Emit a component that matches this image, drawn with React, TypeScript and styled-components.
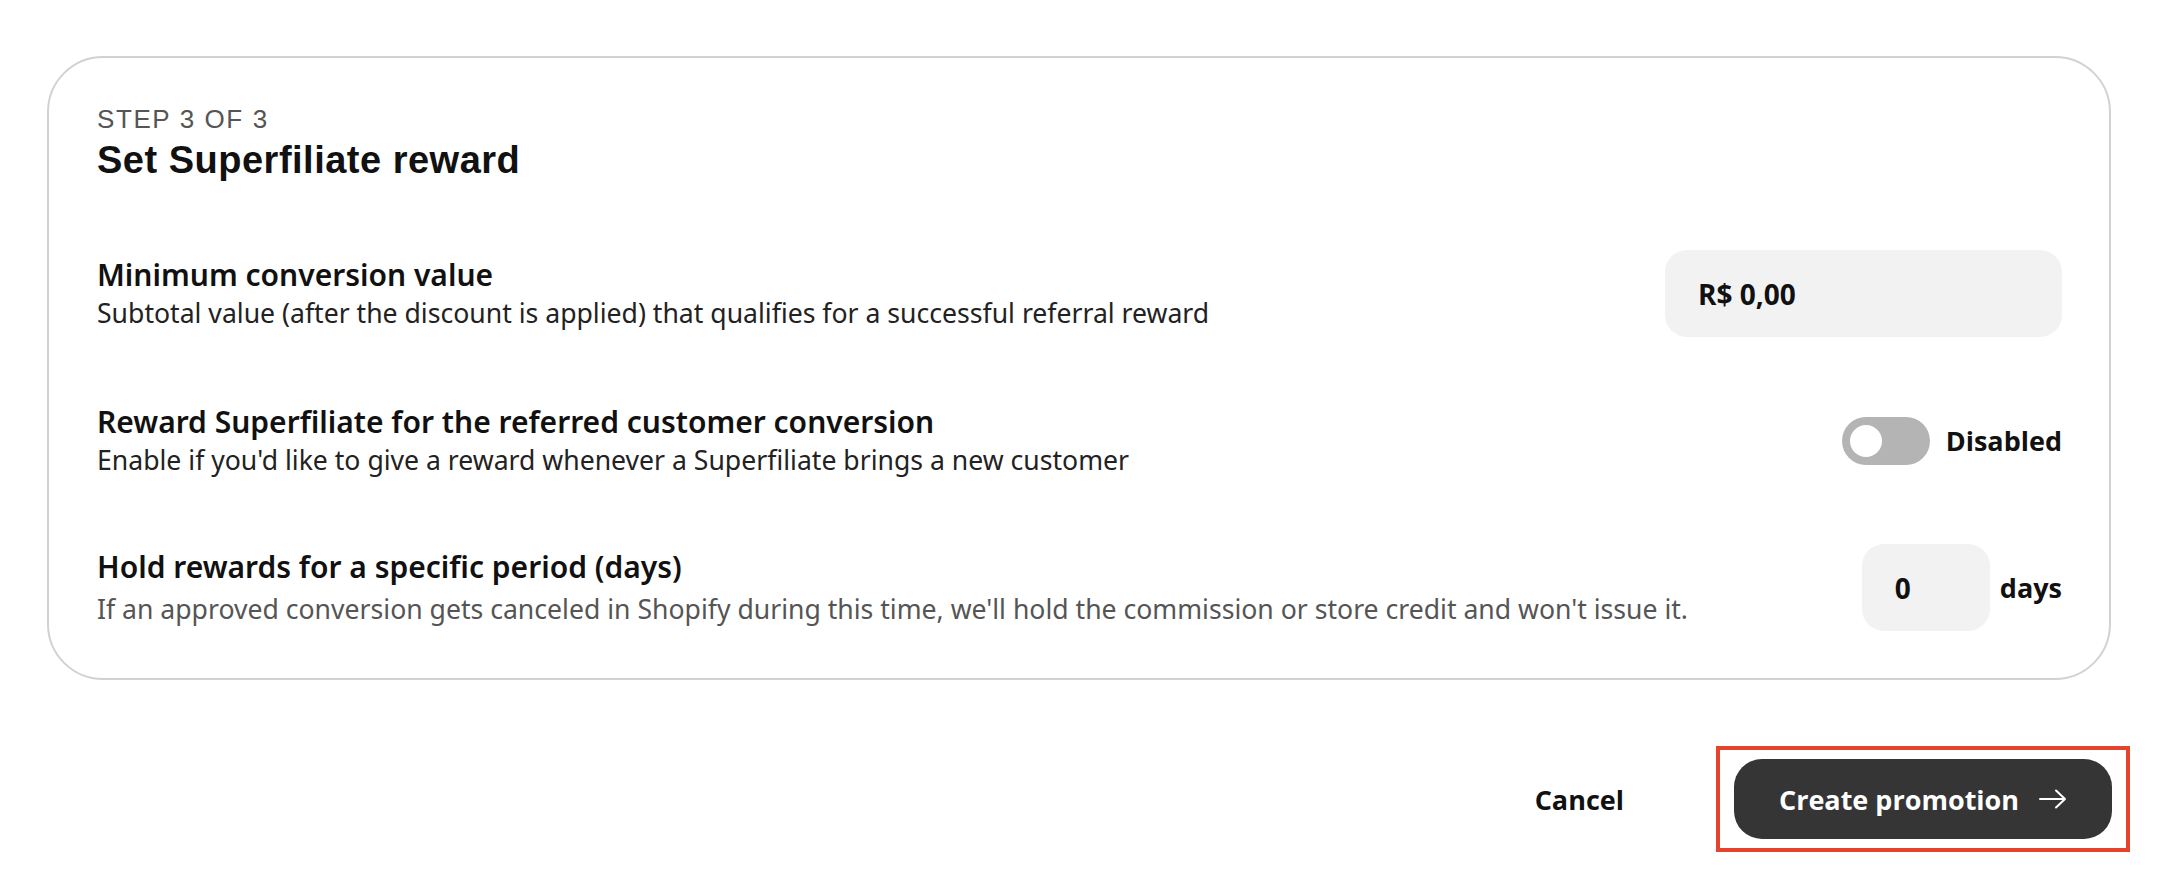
import styled, { createGlobalStyle } from "styled-components";

const GlobalStyle = createGlobalStyle`
  html, body {
    margin: 0;
    padding: 0;
    background: #ffffff;
  }
  body {
    font-family: "Open Sans", "Noto Sans", sans-serif;
    color: #111111;
  }
`;

const Page = styled.div`
  display: flex;
  flex-direction: column;
  padding: 56px 55px 0 47px;
`;

const Card = styled.section`
  border: 2px solid #d2d2d2;
  border-radius: 56px;
  padding: 46px 47px 47px 48px;
  display: flex;
  flex-direction: column;
`;

const StepLabel = styled.div`
  font-family: "Liberation Sans", Arial, sans-serif;
  font-size: 26px;
  line-height: 30px;
  color: #555555;
  letter-spacing: 1.6px;
`;

const Title = styled.h1`
  margin: 4px 0 0;
  font-family: "Liberation Sans", Arial, sans-serif;
  font-size: 38px;
  line-height: 44px;
  font-weight: 700;
  letter-spacing: 0.5px;
  color: #111111;
`;

const Rows = styled.div`
  display: flex;
  flex-direction: column;
  gap: 60px;
  margin-top: 68px;
`;

const Row = styled.div`
  display: flex;
  align-items: center;
  justify-content: space-between;
  min-height: 87px;
  gap: 40px;
`;

const RowText = styled.div`
  display: flex;
  flex-direction: column;
`;

const RowTitle = styled.div`
  font-family: "Noto Sans", "Open Sans", sans-serif;
  font-size: 30px;
  font-weight: 600;
  line-height: 39px;
  color: #111111;
`;

const RowDesc = styled.div<{ muted?: boolean }>`
  margin-top: ${({ muted }) => (muted ? "4px" : "0")};
  font-family: "Noto Sans", "Open Sans", sans-serif;
  font-size: 26.6px;
  line-height: 39px;
  color: ${({ muted }) => (muted ? "#555555" : "#222222")};
`;

const Field = styled.div<{ width: number }>`
  width: ${({ width }) => width}px;
  height: 87px;
  box-sizing: border-box;
  background: #f2f2f2;
  border-radius: 22px;
  display: flex;
  align-items: center;
  padding-left: 33px;
  font-family: "Open Sans", sans-serif;
  font-size: 28px;
  font-weight: 700;
  color: #111111;
`;

const Control = styled.div`
  display: flex;
  align-items: center;
  gap: 10px;
  flex-shrink: 0;
`;

const ControlLabel = styled.span`
  font-family: "Open Sans", sans-serif;
  font-size: 27px;
  font-weight: 700;
  color: #111111;
`;

const Toggle = styled.div`
  width: 88px;
  height: 48px;
  border-radius: 24px;
  background: #b4b4b4;
  display: flex;
  align-items: center;
  padding-left: 8px;
  box-sizing: border-box;
  margin-right: 6px;

  .knob {
    width: 32px;
    height: 32px;
    border-radius: 50%;
    background: #ffffff;
  }
`;

const Footer = styled.div`
  display: flex;
  justify-content: flex-end;
  align-items: center;
  gap: 92px;
  margin-top: 66px;
  margin-right: -19px;
`;

const CancelButton = styled.button`
  border: none;
  background: transparent;
  padding: 0;
  font-family: "Open Sans", sans-serif;
  font-size: 27px;
  font-weight: 700;
  color: #111111;
  cursor: pointer;
`;

const Highlight = styled.div`
  border: 4px solid #e5432b;
  padding: 9px 14px;
`;

const PrimaryButton = styled.button`
  height: 80px;
  width: 378px;
  border: none;
  border-radius: 28px;
  background: #353535;
  color: #ffffff;
  display: flex;
  align-items: center;
  justify-content: center;
  gap: 20px;
  font-family: "Open Sans", sans-serif;
  font-size: 27px;
  font-weight: 700;
  cursor: pointer;
`;

function ArrowRight() {
  return (
    <svg width="28" height="20" viewBox="0 0 28 20" fill="none">
      <path d="M1 10H26M17 1.5L26 10L17 18.5" stroke="#ffffff" strokeWidth="2" strokeLinecap="round" strokeLinejoin="round" />
    </svg>
  );
}

export default function App() {
  return (
    <>
      <GlobalStyle />
      <Page>
        <Card>
          <StepLabel>STEP 3 OF 3</StepLabel>
          <Title>Set Superfiliate reward</Title>
          <Rows>
            <Row>
              <RowText>
                <RowTitle>Minimum conversion value</RowTitle>
                <RowDesc>Subtotal value (after the discount is applied) that qualifies for a successful referral reward</RowDesc>
              </RowText>
              <Field width={397}>R$ 0,00</Field>
            </Row>
            <Row>
              <RowText>
                <RowTitle>Reward Superfiliate for the referred customer conversion</RowTitle>
                <RowDesc>Enable if you'd like to give a reward whenever a Superfiliate brings a new customer</RowDesc>
              </RowText>
              <Control>
                <Toggle>
                  <div className="knob" />
                </Toggle>
                <ControlLabel>Disabled</ControlLabel>
              </Control>
            </Row>
            <Row>
              <RowText>
                <RowTitle>Hold rewards for a specific period (days)</RowTitle>
                <RowDesc muted>If an approved conversion gets canceled in Shopify during this time, we'll hold the commission or store credit and won't issue it.</RowDesc>
              </RowText>
              <Control>
                <Field width={128}>0</Field>
                <ControlLabel>days</ControlLabel>
              </Control>
            </Row>
          </Rows>
        </Card>
        <Footer>
          <CancelButton>Cancel</CancelButton>
          <Highlight>
            <PrimaryButton>
              Create promotion
              <ArrowRight />
            </PrimaryButton>
          </Highlight>
        </Footer>
      </Page>
    </>
  );
}
